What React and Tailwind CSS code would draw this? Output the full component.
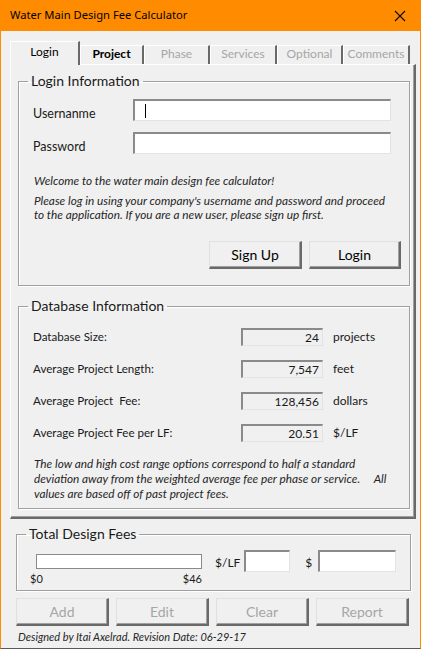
import React from "react";

const font = { fontFamily: "Lato, 'Open Sans', sans-serif" };

const Tab = ({ label, selected, disabled, bold, w }) => (
  <div
    className={`${w} flex items-center justify-center border-t border-l border-white border-r-2 border-r-[#696969] ${
      selected ? "h-[24px] bg-[#f0f0f0] -mb-px z-10" : "h-[19px]"
    } ${disabled ? "text-[#a6a6a6]" : "text-black"} ${bold ? "font-bold" : ""} text-[12px]`}
  >
    <span className={selected ? "-mt-[4px]" : "-mt-[2px]"}>{label}</span>
  </div>
);

const Frame = ({ title, className, children }) => (
  <fieldset
    className={`border border-[#a0a0a0] shadow-[1px_1px_0_#fff,inset_1px_1px_0_#fff] ${className}`}
  >
    <legend className="ml-[9px] px-[3px] text-[14px] leading-[18px] text-[#1a1a1a]">{title}</legend>
    {children}
  </fieldset>
);

const Input = ({ className, children }) => (
  <div
    className={`border-t-2 border-l-2 border-[#8a8a8a] border-r border-b border-r-[#e3e3e3] border-b-[#e3e3e3] ${className}`}
  >
    {children}
  </div>
);

const Button = ({ label, disabled, className }) => (
  <button
    className={`h-[28px] bg-[#f0f0f0] border-t border-l border-[#e0e0e0] border-r-2 border-b-2 border-r-[#696969] border-b-[#696969] shadow-[inset_-1px_-1px_0_#a0a0a0] ${
      disabled ? "text-[#a6a6a6]" : "text-black"
    } ${className}`}
  >
    {label}
  </button>
);

const stats = [
  { label: "Database Size:", value: "24", unit: "projects" },
  { label: "Average Project Length:", value: "7,547", unit: "feet" },
  { label: "Average Project  Fee:", value: "128,456", unit: "dollars" },
  { label: "Average Project Fee per LF:", value: "20.51", unit: "$/LF" },
];

export default function App() {
  return (
    <div
      className="w-[421px] h-[649px] bg-[#f0f0f0] border-l border-r border-[#ff8c00] border-b border-b-[#595959] flex flex-col overflow-hidden text-[#1a1a1a]"
      style={font}
    >
      {/* title bar */}
      <div
        className="h-[31px] -mx-px bg-[#ff8c00] flex items-center justify-between pl-[10px] pr-[10px] shrink-0"
        style={{ fontFamily: "'Noto Sans', sans-serif" }}
      >
        <span className="text-[11.2px] text-black">Water Main Design Fee Calculator</span>
        <svg width="12" height="12" viewBox="0 0 12 12" className="mr-[5px]">
          <path d="M1 1L11 11M11 1L1 11" stroke="#000" strokeWidth="1.1" />
        </svg>
      </div>

      {/* tabs */}
      <div className="flex items-end ml-[9px] mt-[9px] h-[24px]">
        <Tab label="Login" selected w="w-[70px]" />
        <Tab label="Project" bold w="w-[64px]" />
        <Tab label="Phase" disabled w="w-[66px]" />
        <Tab label="Services" disabled w="w-[67px]" />
        <Tab label="Optional" disabled w="w-[66px]" />
        <Tab label="Comments" disabled w="w-[67px]" />
      </div>

      {/* tab page */}
      <div className="ml-[9px] w-[406px] h-[455px] border-t border-l border-white border-r-2 border-b-2 border-r-[#696969] border-b-[#696969] shadow-[inset_-1px_-1px_0_#a0a0a0] pl-[7px] pt-[7px]">
        <Frame title="Login Information" className="w-[392px] h-[214px]">
          <div className="flex items-start mt-[9px]">
            <span className="w-[114px] pl-[14px] mt-[8px] leading-[14px] text-[12.5px]">Usernanme</span>
            <Input className="w-[258px] h-[22px] bg-white flex items-center pl-[10px]">
              <span className="w-px h-[14px] bg-black" />
            </Input>
          </div>
          <div className="flex items-start mt-[11px]">
            <span className="w-[114px] pl-[14px] mt-[8px] leading-[14px] text-[12.5px]">Password</span>
            <Input className="w-[258px] h-[22px] bg-white" />
          </div>
          <div className="pl-[15px] italic text-[11.8px] text-[#262626]">
            <p className="mt-[19px] leading-[15px]">Welcome to the water main design fee calculator!</p>
            <p className="mt-[6px] leading-[14px]">
              Please log in using your company's username and password and proceed
              <br />
              to the application. If you are a new user, please sign up first.
            </p>
          </div>
          <div className="flex justify-end gap-[7px] pr-[8px] mt-[19px]">
            <Button label="Sign Up" className="w-[93px] text-[14px]" />
            <Button label="Login" className="w-[92px] text-[14px]" />
          </div>
        </Frame>

        <Frame title="Database Information" className="w-[392px] h-[212px] mt-[11px]">
          <div className="flex flex-col gap-[14px] mt-[13px]">
            {stats.map((s) => (
              <div key={s.label} className="flex items-center text-[12px]">
                <span className="w-[222px] pl-[14px] whitespace-pre text-[11.6px]">{s.label}</span>
                <Input className="w-[82px] h-[18px] bg-[#f0f0f0] flex items-center justify-end pr-[3px] border-t border-l border-[#8a8a8a]">
                  {s.value}
                </Input>
                <span className="ml-[10px] -mt-[1px]">{s.unit}</span>
              </div>
            ))}
          </div>
          <p className="mt-[14px] pl-[15px] italic text-[11.8px] leading-[15px] text-[#262626] whitespace-pre">
            {"The low and high cost range options correspond to half a standard\ndeviation away from the weighted average fee per phase or service.     All\nvalues are based off of past project fees."}
          </p>
        </Frame>
      </div>

      {/* totals */}
      <Frame title="Total Design Fees" className="ml-[15px] mt-[6px] w-[395px] h-[66px]">
        <div className="flex items-start mt-[7px] text-[12px]">
          <div className="ml-[13px] w-[172px] flex flex-col">
            <div className="ml-[6px] w-[166px] h-[15px] bg-white border border-[#8a8a8a] mt-[4px]" />
            <div className="flex justify-between text-[11px] leading-[14px] mt-[3px]">
              <span>$0</span>
              <span>$46</span>
            </div>
          </div>
          <span className="ml-[13px] mt-[4px]">$/LF</span>
          <Input className="ml-[4px] w-[46px] h-[22px] bg-white" />
          <span className="ml-[15px] mt-[4px]">$</span>
          <Input className="ml-[6px] w-[78px] h-[22px] bg-white" />
        </div>
      </Frame>

      <div className="flex gap-[7px] ml-[15px] mt-[7px]">
        <Button label="Add" disabled className="w-[93px] text-[14px]" />
        <Button label="Edit" disabled className="w-[93px] text-[14px]" />
        <Button label="Clear" disabled className="w-[93px] text-[14px]" />
        <Button label="Report" disabled className="w-[93px] text-[14px]" />
      </div>

      <p className="ml-[17px] mt-[3px] italic text-[11px] leading-[15px] text-[#262626]">
        Designed by Itai Axelrad. Revision Date: 06-29-17
      </p>
    </div>
  );
}
